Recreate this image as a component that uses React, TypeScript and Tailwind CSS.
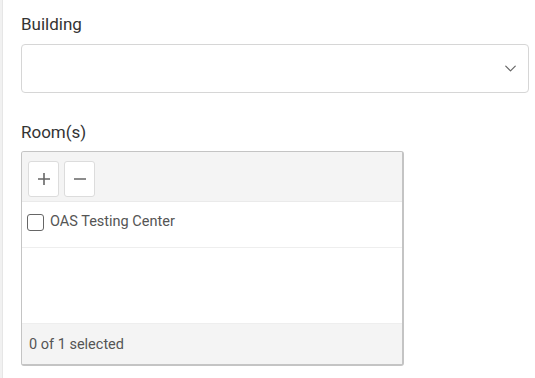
import { ChevronDown } from 'lucide-react';

export default function App() {
  return (
    <div className="w-[535px] h-[378px] bg-white flex font-['Roboto',sans-serif] text-[#333] overflow-hidden">
      <div className="w-[3px] bg-[#f1f1f1] border-r border-[#e6e6e6] shrink-0" />
      <div className="flex-1 pl-[18px] pr-[6px] pt-[13px]">
        <div className="text-[17px] leading-[22px]">Building</div>
        <div className="mt-[9px] h-[49px] border border-[#d6d6d6] rounded-[4px] flex items-center justify-end pr-[8px]">
          <ChevronDown className="w-[19px] h-[19px] text-[#666]" strokeWidth={1.5} />
        </div>
        <div className="mt-[28px] text-[17px] leading-[22px]">Room(s)</div>
        <div className="mt-[8px] w-[383px] h-[215px] border border-[#c4c4c4] border-r-2 border-b-2 rounded-[3px] flex flex-col overflow-hidden">
          <div className="h-[50px] bg-[#f4f4f4] border-b border-[#eaeaea] flex items-start gap-[5px] pl-[6px] pt-[9px]">
            <button className="w-[31px] h-[36px] bg-white border border-[#dcdcdc] rounded-[3px] flex items-center justify-center">
              <svg width="14" height="14" viewBox="0 0 14 14">
                <path d="M7 1v12M1 7h12" stroke="#666" strokeWidth="1.6" />
              </svg>
            </button>
            <button className="w-[31px] h-[36px] bg-white border border-[#dcdcdc] rounded-[3px] flex items-center justify-center">
              <svg width="14" height="14" viewBox="0 0 14 14">
                <path d="M1 7h12" stroke="#666" strokeWidth="1.6" />
              </svg>
            </button>
          </div>
          <div className="h-[46px] border-b border-[#eeeeee] flex items-center pl-[5px] pb-[5px]">
            <span className="w-[17px] h-[17px] border-[1.5px] border-[#666] rounded-[3px] bg-white" />
            <span className="ml-[6px] text-[14.5px] text-[#555]">OAS Testing Center</span>
          </div>
          <div className="flex-1" />
          <div className="h-[41px] bg-[#f4f4f4] border-t border-[#eeeeee] flex items-center pl-[7px] pt-[2px] text-[14.5px] text-[#555]">
            0 of 1 selected
          </div>
        </div>
      </div>
    </div>
  );
}
